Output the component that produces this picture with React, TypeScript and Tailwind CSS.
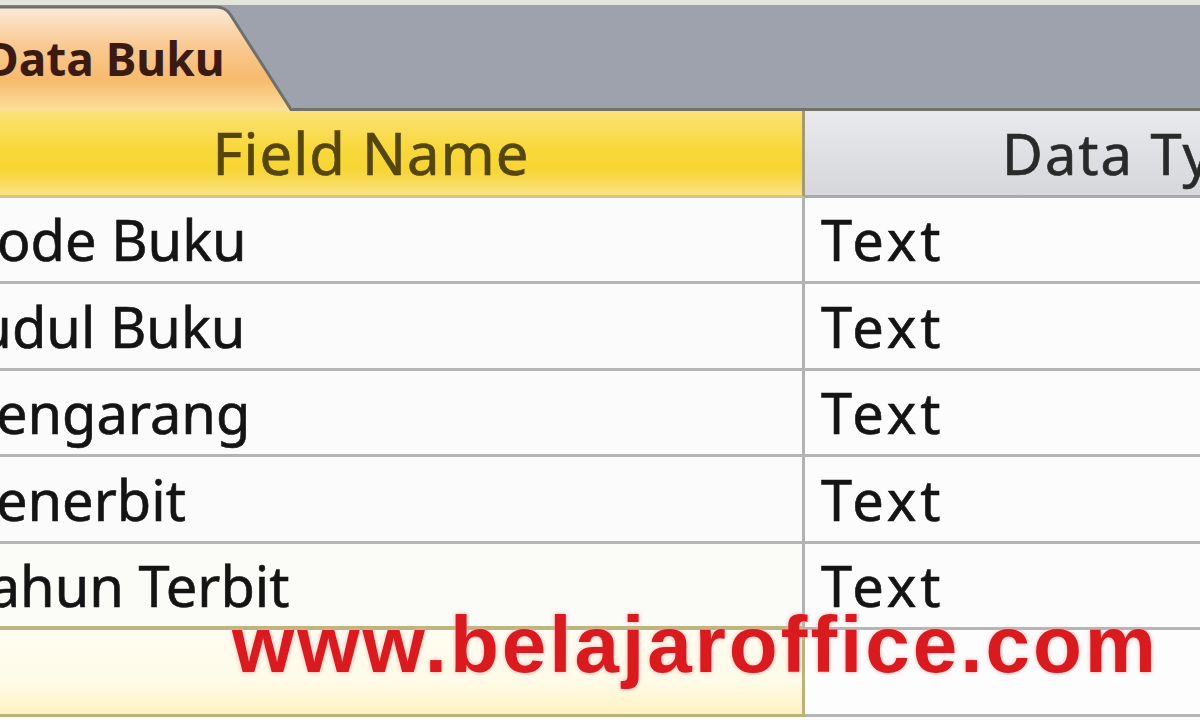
import React from "react";

const rows = ["Kode Buku", "Judul Buku", "Pengarang", "Penerbit", "Tahun Terbit"];

function TabShape() {
  return (
    <svg className="absolute inset-0" width="300" height="106" viewBox="0 0 300 106">
      <defs>
        <linearGradient id="tabFill" x1="0" y1="0" x2="0" y2="1">
          <stop offset="0" stopColor="#fdeadb" />
          <stop offset="0.35" stopColor="#f9ca94" />
          <stop offset="0.7" stopColor="#f7ba6e" />
          <stop offset="1" stopColor="#fbe09a" />
        </linearGradient>
      </defs>
      <path d="M0 2 L216 2 Q225 2 230 9 L293 106 L0 106 Z" fill="url(#tabFill)" />
      <path d="M0 2 L216 2 Q225 2 230 9 L291 104.5 L300 104.5" fill="none" stroke="#6f706b" strokeWidth="3" />
    </svg>
  );
}

export default function App() {
  return (
    <div className="relative flex h-[720px] w-[1200px] flex-col overflow-hidden bg-[#fbfbfb] font-['Noto_Sans',sans-serif]">
      <div className="h-[5px] shrink-0 bg-[#e3e5dd]" />

      {/* tab strip */}
      <div className="flex h-[106px] shrink-0 bg-[#9ea2ad]">
        <div className="relative h-full w-[300px] shrink-0">
          <TabShape />
          <span className="relative ml-[-15px] block pt-[30px] text-[46px] font-bold leading-none text-[#3b1a12]">
            Data Buku
          </span>
        </div>
        <div className="flex-1 border-b-[3px] border-[#72746c]" />
      </div>

      {/* header */}
      <div className="grid h-[86.5px] shrink-0 grid-cols-[805px_1fr]">
        <div className="flex items-center justify-center border-b-[3px] border-r-[3px] border-b-[#cfc68a] border-r-[#a39c72] bg-[linear-gradient(180deg,#fae277_0%,#f8d83a_45%,#f7d534_70%,#fbe384_100%)] pr-[60px]">
          <span className="text-[58px] leading-none tracking-[1px] text-[#54460e] [-webkit-text-stroke:0.6px_#54460e]">Field Name</span>
        </div>
        <div className="flex items-center border-b-[3px] border-[#a9aaac] bg-[linear-gradient(180deg,#e9eaed_0%,#dcdee2_60%,#d6d8dc_100%)] pl-[197px]">
          <span className="whitespace-nowrap text-[56px] leading-none tracking-[2px] text-[#2a2a2a] [-webkit-text-stroke:0.6px_#2a2a2a]">Data Type</span>
        </div>
      </div>

      {/* rows */}
      {rows.map((name, i) => {
        const beforeNew = i === rows.length - 1;
        return (
          <div key={name} className="grid h-[86.5px] shrink-0 grid-cols-[805px_1fr]">
            <div
              className={
                beforeNew
                  ? "flex items-center overflow-hidden border-r-[3px] border-b-[4px] border-r-[#b2b2b2] border-b-[#bdb57c] bg-[#fbfbf8]"
                  : "flex items-center overflow-hidden border-r-[3px] border-b-[3px] border-r-[#b2b2b2] border-b-[#b5b5b5] bg-[#fbfbfb]"
              }
            >
              <span className="ml-[-38px] whitespace-nowrap text-[56px] leading-none text-[#141414] [-webkit-text-stroke:0.6px_#141414]">
                {name}
              </span>
            </div>
            <div className="flex items-center border-b-[3px] border-[#b5b5b5] bg-[#fcfcfc] pl-[16px]">
              <span className="text-[56px] leading-none tracking-[4px] text-[#141414] [-webkit-text-stroke:0.6px_#141414]">Text</span>
            </div>
          </div>
        );
      })}

      {/* new record row */}
      <div className="grid h-[86.5px] shrink-0 grid-cols-[805px_1fr]">
        <div className="border-r-[3px] border-b-[3px] border-[#b9b27a] bg-[linear-gradient(180deg,#fffdf2_0%,#fffbe8_60%,#fff3c2_100%)]" />
        <div className="border-b-[3px] border-[#b5b5b5] bg-[#fdfdfd]" />
      </div>

      {/* watermark */}
      <span className="absolute left-[232px] top-[605px] whitespace-nowrap font-['Liberation_Sans',Arial,sans-serif] text-[80px] font-bold leading-none tracking-[3px] text-[#d91a1f] [text-shadow:0_0_4px_#ffa8a8]">
        www.belajaroffice.com
      </span>
    </div>
  );
}
